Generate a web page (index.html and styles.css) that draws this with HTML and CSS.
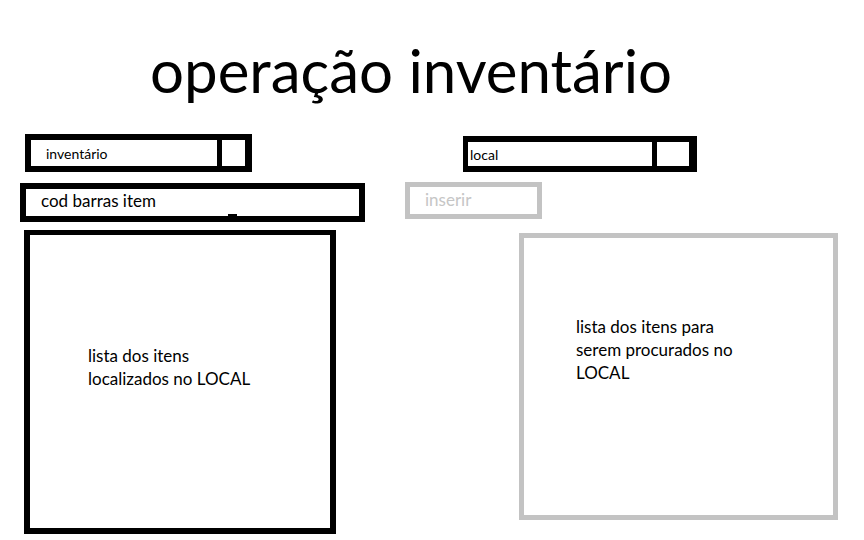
FILE: index.html
```html
<!DOCTYPE html>
<html lang="pt">
<head>
  <meta charset="UTF-8" />
  <title>operação inventário</title>
  <link rel="stylesheet" href="styles.css">
</head>
<body>
  <h1 class="title">operação inventário</h1>

  <div class="row row-selects">
    <div class="combo combo-inv">
      <div class="combo-field">inventário</div>
      <div class="combo-btn"></div>
    </div>
    <div class="combo combo-local">
      <div class="combo-field">local</div>
      <div class="combo-btn"></div>
    </div>
  </div>

  <div class="row row-inputs">
    <div class="barcode">cod barras item<span class="cursor"></span></div>
    <div class="insert">inserir</div>
  </div>

  <div class="row row-lists">
    <div class="list list-found">lista dos itens<br>localizados no LOCAL</div>
    <div class="list list-search">lista dos itens para<br>serem procurados no<br>LOCAL</div>
  </div>
</body>
</html>
```

FILE: styles.css
```css
* {
  box-sizing: border-box;
}

body {
  margin: 0;
  font-family: Lato, "Open Sans", sans-serif;
  color: #000;
  background: #fff;
}

.title {
  margin: 0;
  height: 134px;
  padding: 34px 0 0 150px;
  font-size: 60px;
  font-weight: normal;
  line-height: 72px;
}

.row {
  display: flex;
  align-items: flex-start;
}

.row-selects,
.row-inputs {
  height: 48px;
}

/* dropdowns */
.combo {
  display: flex;
  border: 6px solid #000;
  font-size: 14px;
}

.combo-field {
  flex: 1;
  display: flex;
  align-items: center;
}

.combo-btn {
  border-left: 5px solid #000;
}

.combo-inv {
  margin-left: 25px;
  width: 227px;
  height: 38px;
  border-right-width: 7px;
}

.combo-inv .combo-field {
  padding-left: 15px;
}

.combo-inv .combo-btn {
  width: 28px;
}

.combo-local {
  margin: 2px 0 0 211px;
  width: 234px;
  height: 36px;
  border-left-width: 5px;
  border-right-width: 8px;
}

.combo-local .combo-field {
  padding-left: 2px;
}

.combo-local .combo-btn {
  width: 37px;
}

/* inputs */
.barcode {
  position: relative;
  margin: 1px 0 0 20px;
  width: 345px;
  height: 39px;
  border: 6px solid #000;
  padding-left: 15px;
  font-size: 17px;
  line-height: 24px;
}

.barcode .cursor {
  position: absolute;
  left: 202px;
  bottom: 0;
  width: 9px;
  height: 2px;
  background: #000;
}

.insert {
  margin-left: 40px;
  width: 137px;
  height: 37px;
  border: 5px solid #c3c3c3;
  padding-left: 15px;
  font-size: 17px;
  line-height: 25px;
  color: #c6c6c6;
}

/* lists */
.list {
  font-size: 17px;
  line-height: 23px;
}

.list-found {
  margin-left: 24px;
  width: 312px;
  height: 304px;
  border: 6px solid #000;
  border-top-width: 5px;
  padding: 109px 0 0 58px;
}

.list-search {
  margin: 3px 0 0 183px;
  width: 319px;
  height: 287px;
  border: 5px solid #c3c3c3;
  padding: 77px 0 0 52px;
}
```
